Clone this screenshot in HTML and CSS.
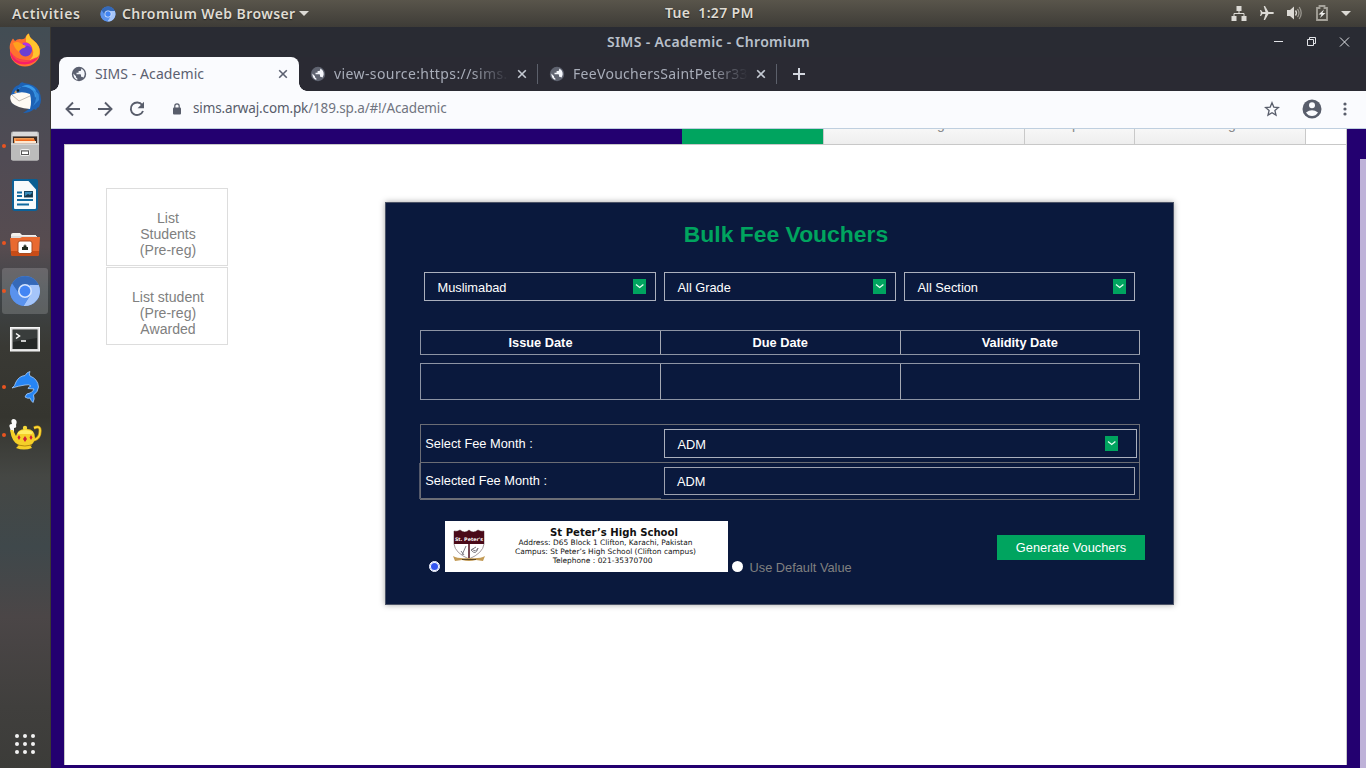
FILE: index.html
```html
<!DOCTYPE html>
<html lang="en">
<head>
<meta charset="utf-8">
<title>SIMS - Academic</title>
<link rel="stylesheet" href="styles.css">
</head>
<body>
<svg class="defs" width="0" height="0">
  <symbol id="globe" viewBox="0 0 16 16"><circle cx="8" cy="8" r="7.2" fill="currentColor"/><path class="land" d="M2.300 7.500L5 10.200V11q0 1 1.300 1.300V14Q2.500 12.600 2.300 7.500ZM9.500 2.300Q13.800 4 13.700 8.300Q13.400 10.500 12.200 11.800Q11.700 10.800 10.700 10.800H10V9q0-.8-.8-.8H5.500V6.800H7q.6 0 .6-.6V5H9q1.200 0 1.200-1.200V2.600Z"/></symbol>
  <symbol id="chromium" viewBox="0 0 32 32"><circle cx="16" cy="16" r="15" fill="#4b87e4"/><path d="M3 8.500A15 15 0 0 1 29.600 10L16 9.500L10 19Z" fill="#3569b8"/><path d="M29.700 10A15 15 0 0 1 14.500 31L21.500 20L21 10Z" fill="#a5c5fa"/><path d="M3 8.500A15 15 0 0 0 14.500 31L21 20L9.500 18Z" fill="#5a92ed"/><circle cx="16" cy="16" r="7" fill="#d7e5fd"/><circle cx="16" cy="16" r="5.400" fill="#4285f4"/></symbol>
  <symbol id="cross" viewBox="0 0 10 10"><path d="M1.200 1.200L8.800 8.800M8.800 1.200L1.200 8.800" stroke="currentColor" stroke-width="1.600"/></symbol>
</svg>

<header class="topbar">
  <span class="activities">Activities</span>
  <svg class="app-icon" width="16" height="16"><use href="#chromium"/></svg>
  <span class="app-name">Chromium Web Browser</span>
  <i class="caret"></i>
  <span class="clock">Tue&nbsp; 1:27 PM</span>
  <div class="indicators">
    <svg width="16" height="16" viewBox="0 0 16 16"><path d="M5.500 1h5v5h-5zM.5 11h5v5h-5zM10.500 11h5v5h-5z" fill="#dcdad5"/><path d="M8 6v2.500M3 11V8.500h10V11" fill="none" stroke="#dcdad5"/></svg>
    <svg width="16" height="16" viewBox="0 0 16 16"><path d="M15 8c0 .7-1 1-2 1H9.500L6 15H4.700L6.500 9H3.500L2 11H1L1.800 8L1 5h1l1.500 2h3L4.700 1H6l3.500 6H13c1 0 2 .3 2 1z" fill="#dcdad5"/></svg>
    <svg width="16" height="16" viewBox="0 0 16 16"><path d="M0 5h3l4-3.500v13L3 11H0z" fill="#dcdad5"/><path d="M8.500 5.500q2 2.500 0 5" fill="none" stroke="#dcdad5" stroke-width="1.300"/><path d="M10.500 3.800q3 4.200 0 8.400M12.200 2q4 6 0 12" fill="none" stroke="#9a978f" stroke-width="1.300"/></svg>
    <svg width="14" height="16" viewBox="0 0 14 16"><path d="M2 3h2.500V1h5v2H12v12H2z" fill="none" stroke="#a5a29a" stroke-width="1.800"/><path d="M9 4.500L3.500 9.500H6.500L5 13L10.500 8H7.500z" fill="#eeeeec"/></svg>
    <i class="caret"></i>
  </div>
</header>

<div class="desktop">
  <nav class="dock">
    <div class="dock-item"><svg width="34" height="34" viewBox="0 0 34 34">
      <path d="M2 17C1 12 3 8 5 5.500L7 8Q9 6 12 6Q17 7 18 3Q19 1 21 .5Q21 4 25 7Q32 12 32 19A15 14.500 0 0 1 2 19Z" fill="#ff712f"/>
      <path d="M18 4Q19 1 21 .5Q21 4 25 7Q33 13 31.500 21Q28 29 19 29Q28 24 24 14Q22 10 18 9Z" fill="#ffc52e"/>
      <path d="M2 18Q3 31.500 17 31.500Q27 31 31 23Q25 28 18 27Q7 27 2 18Z" fill="#f71e68"/>
      <path d="M3 20Q10 29 22 27L29 24Q24 29 16 29Q7 29 3 20Z" fill="#fb4a48"/>
      <circle cx="17.500" cy="17" r="6.500" fill="#6c3fd2"/><path d="M14 10Q22 8 24 16Q21 12 18 13Z" fill="#b530e6"/>
      <path d="M5 10Q10 8 12 10L18 13Q17 15 14 15.500Q11 17 11 19Q6 15 5 10Z" fill="#ffa11d"/></svg></div>
    <div class="dock-item"><svg width="34" height="34" viewBox="0 0 34 34">
      <path d="M3 14Q5 5 11 4Q13 0 16 2Q27 3 31 10Q35 19 31 26L29 27L28 29L26 28Q22 32 15 32L21 28L5 23Z" fill="#1d62b5"/>
      <path d="M9 9Q12 5 18 6Q27 8 27 17Q30 13 27 8Q21 2 15 5Z" fill="#3a9bea"/>
      <path d="M25 9Q31 16 25 25L31 19Q32 11 25 9Z" fill="#3487d6"/>
      <path d="M3 14Q13 9 22 13Q24 21 22 28Q9 27 4 22Q1 17 3 14Z" fill="#fdfaf4"/><path d="M4 14L11 20L22 15" fill="none" stroke="#bfb9b0"/><circle cx="10" cy="9.500" r="1.200" fill="#122"/><path d="M8 9L9 12L6 12Z" fill="#db9b55"/></svg></div>
    <div class="dock-item running"><svg width="34" height="34" viewBox="0 0 34 34">
      <rect x="3" y="2.500" width="28" height="29" rx="2" fill="#b8b8b8"/><path d="M5 3h24l1 4H4z" fill="#d9d9d9"/><rect x="5" y="7.500" width="24" height="7" fill="#3b2a22"/><path d="M6 9h20v5H6z" fill="#ef9b55"/><path d="M8 10.500h19v4H8z" fill="#f0681f"/><path d="M7 12h21v2H7z" fill="#fce6cf"/><path d="M3 14.500h28v15q0 2-2 2H5q-2 0-2-2z" fill="#bcbcbc"/><path d="M3 14.500h28v1H3z" fill="#ededed"/><rect x="12.500" y="20.500" width="9" height="6" rx="1" fill="none" stroke="#eee"/><rect x="13.500" y="22" width="7" height="3.500" fill="#fff" stroke="#555"/></svg></div>
    <div class="dock-item"><svg width="34" height="34" viewBox="0 0 34 34">
      <path d="M6 2h15L29 11v19q0 2-2 2H7q-2 0-2-2v-26q0-2 1-2z" fill="#f8fafb" stroke="#0c6198" stroke-width="2"/><path d="M20 1h8q2 0 2 2v9z" fill="#0a5e91"/><path d="M9 14.500h5M9 18h5M9 22h16M9 26.500h12" stroke="#10699f" stroke-width="2"/><rect x="16.500" y="13.500" width="8" height="5.500" fill="#388ab9" stroke="#18445f"/><path d="M17 18l3-2 2 1 2-2v4h-7z" fill="#173447"/></svg></div>
    <div class="dock-item running"><svg width="34" height="34" viewBox="0 0 34 34">
      <path d="M3 9q0-2 2-2h7l2 2h14v8H3z" fill="#f4f1ed"/><path d="M3 10h26v2H3z" fill="#ddd"/><path d="M2 12h10l2-1h18L31 28q0 2-2 2H5q-2 0-2-2z" fill="#e96a30"/><path d="M3 25h28v3q0 2-2 2H5q-2 0-2-2z" fill="#c94c17"/><rect x="10" y="15" width="14" height="12.500" rx="2" fill="#fff" stroke="#a74b20"/><path d="M14 24v-3h1.500v-1.500h1v-1h1v1h1V21H20v3z" fill="#222d20"/></svg></div>
    <div class="dock-item running active"><svg width="32" height="32"><use href="#chromium"/></svg></div>
    <div class="dock-item"><svg width="34" height="34" viewBox="0 0 34 34">
      <rect x="2.500" y="5.500" width="29" height="23.500" fill="#dedede" stroke="#f7f7f7"/><rect x="4.500" y="7.500" width="25" height="19.500" fill="#252827"/><path d="M5 8h24v8L5 20z" fill="#393d3c"/><path d="M8 11.500l3.500 2.500L8 16.500M13 19h5" fill="none" stroke="#fff" stroke-width="1.500"/></svg></div>
    <div class="dock-item running"><svg width="34" height="34" viewBox="0 0 34 34">
      <path d="M4 18Q7 16 8 12Q11 6 17 5.500Q19 2 22 1.500Q20.500 4 22 6Q30 9 30.500 17Q30 22 25.500 25Q27 29 25 32.500Q23 31 22 28Q20 29 17 27Q18 23 22 23Q25 22 26 19L20 18.500Q20 17 23 16Q21 14 17 15Q10 16 4 18Z" fill="#2685f5" stroke="#a9cdf7" stroke-width=".8"/></svg></div>
    <div class="dock-item running"><svg width="34" height="34" viewBox="0 0 34 34">
      <path d="M2 10Q0 6 4 6Q2 1 6 1Q10 2 8 7Q9 10 6 10L6 14H3Z" fill="#fafafa"/><path d="M26 10Q33 7 32 14Q32 20 26 22" fill="none" stroke="#c99a12" stroke-width="3"/><path d="M26 10Q33 7 32 14Q32 20 26 22" fill="none" stroke="#ffdf3c" stroke-width="1.500"/><path d="M2 12H5L8 18Q10 11 17 11Q27 10 27 20Q26 26 22 27L24 30Q16 33 8 30L11 27Q4 25 2 12Z" fill="#f5cf28"/><path d="M10 14Q17 10 25 14L24 16H10Z" fill="#ffed62"/><circle cx="17" cy="10" r="2.200" fill="#f6d839"/><path d="M9.500 27Q17 29 24 27" fill="none" stroke="#b78a0c"/><path d="M11 17l1.500 2.500-1.500 2.500L9.500 19.500zM17 18l2 3-2 3-2-3zM23 17l1.500 2.500-1.500 2.500-1.500-2.500z" fill="#d11f38"/></svg></div>
    <div class="app-grid"><i></i><i></i><i></i><i></i><i></i><i></i><i></i><i></i><i></i></div>
  </nav>

  <main class="window">
    <div class="titlebar">
      <span class="window-title">SIMS - Academic - Chromium</span>
      <svg class="win-buttons" width="80" height="12" viewBox="0 0 80 12" fill="none" stroke="#e2e4e8"><path d="M1 5.500h9M34.500 3.500h6v6h-6zM36.500 3.500v-2h6v6h-2M67 1.500l9 9M76 1.500l-9 9"/></svg>
    </div>
    <div class="tabs">
      <div class="tab tab-active"><svg class="favicon" width="16" height="16"><use href="#globe"/></svg><span class="t1">SIMS - Academic</span><svg class="close" width="10" height="10"><use href="#cross"/></svg></div>
      <div class="tab tab-two"><svg class="favicon" width="16" height="16"><use href="#globe"/></svg><span class="fade t2">view-source:https://sims.</span><svg class="close" width="10" height="10"><use href="#cross"/></svg></div>
      <div class="tab tab-three"><svg class="favicon" width="16" height="16"><use href="#globe"/></svg><span class="fade t3">FeeVouchersSaintPeter33</span><svg class="close" width="10" height="10"><use href="#cross"/></svg></div>
      <svg class="new-tab" width="14" height="14" viewBox="0 0 14 14"><path d="M7 1v12M1 7h12" stroke="#d3d7df" stroke-width="2"/></svg>
    </div>
    <div class="toolbar">
      <svg width="16" height="16" viewBox="0 0 16 16"><path d="M15 8H2M8 1.500L1.500 8L8 14.500" fill="none" stroke="currentColor" stroke-width="1.900"/></svg>
      <svg width="16" height="16" viewBox="0 0 16 16"><path d="M1 8h13M8 1.500L14.500 8L8 14.500" fill="none" stroke="currentColor" stroke-width="1.900"/></svg>
      <svg width="16" height="16" viewBox="0 0 16 16"><path d="M13.200 4A6.300 6.300 0 1 0 14 10" fill="none" stroke="currentColor" stroke-width="1.900"/><path d="M15 .8v6.400H8.600z" fill="currentColor"/></svg>
      <svg class="lock" width="10" height="12" viewBox="0 0 10 12"><rect x="1" y="4.500" width="8" height="7" rx="1" fill="currentColor"/><path d="M2.800 5V3a2.200 2.200 0 0 1 4.400 0v2" fill="none" stroke="currentColor" stroke-width="1.200"/></svg>
      <span class="url"><b>sims.arwaj.com.pk</b>/189.sp.a/#!/Academic</span>
      <svg class="star" width="16" height="16" viewBox="0 0 16 16"><path d="M8 1.800l1.800 4.300 4.600.4-3.500 3 1.100 4.600L8 11.700l-4 2.400 1.100-4.600-3.500-3 4.600-.4z" fill="none" stroke="currentColor" stroke-width="1.300"/></svg>
      <svg class="avatar" width="20" height="20" viewBox="0 0 20 20"><circle cx="10" cy="10" r="9.500" fill="currentColor"/><circle cx="10" cy="6.300" r="3" fill="#fafbfe"/><path d="M4 13.500q6-4.500 12 0q-2.300 3.500-6 3.500t-6-3.500z" fill="#fafbfe"/></svg>
      <svg class="menu" width="4" height="14" viewBox="0 0 4 14" fill="currentColor"><circle cx="2" cy="2" r="1.600"/><circle cx="2" cy="7" r="1.600"/><circle cx="2" cy="12" r="1.600"/></svg>
    </div>

    <div class="page">
      <div class="scroll-thumb"></div>
      <div class="page-tabs">
        <div class="ptab ptab-green"></div><div class="ptab ptab-a"><span>g</span></div><div class="ptab ptab-b"><span>p</span></div><div class="ptab ptab-c"><span>g</span></div><div class="ptab-rest"></div>
      </div>
      <div class="panel">
        <aside class="side">
          <a class="side-link">List<br>Students<br>(Pre-reg)</a>
          <a class="side-link">List student<br>(Pre-reg)<br>Awarded</a>
        </aside>
        <section class="card">
          <h1>Bulk Fee Vouchers</h1>
          <div class="filters">
            <div class="select">Muslimabad<svg class="arrow" width="13" height="15" viewBox="0 0 13 15"><path d="M3 5.500l3.700 3 3.700-3" fill="none" stroke="#e6fff3" stroke-width="1.300"/></svg></div>
            <div class="select">All Grade<svg class="arrow" width="13" height="15" viewBox="0 0 13 15"><path d="M3 5.500l3.700 3 3.700-3" fill="none" stroke="#e6fff3" stroke-width="1.300"/></svg></div>
            <div class="select">All Section<svg class="arrow" width="13" height="15" viewBox="0 0 13 15"><path d="M3 5.500l3.700 3 3.700-3" fill="none" stroke="#e6fff3" stroke-width="1.300"/></svg></div>
          </div>
          <div class="dates dates-head"><b>Issue Date</b><b>Due Date</b><b>Validity Date</b></div>
          <div class="dates dates-body"><span></span><span></span><span></span></div>
          <div class="months">
            <div class="label">Select Fee Month :</div>
            <div class="field"><div class="select wide">ADM<svg class="arrow" width="13" height="15" viewBox="0 0 13 15"><path d="M3 5.500l3.700 3 3.700-3" fill="none" stroke="#e6fff3" stroke-width="1.300"/></svg></div></div>
            <div class="label label-second">Selected Fee Month :</div>
            <div class="field field-second"><div class="input">ADM</div></div>
          </div>
          <div class="actions">
            <i class="radio checked"></i>
            <div class="letterhead">
              <svg class="crest" width="34" height="34" viewBox="0 0 34 34"><path d="M2 2Q5 3 8 1Q13 5 17 1Q21 5 26 1Q29 3 32 2V15Q31 24 17 30Q3 24 2 15Z" fill="#fff" stroke="#8c8084" stroke-width=".8"/><path d="M2 2Q5 3 8 1Q13 5 17 1Q21 5 26 1Q29 3 32 2V15H2Z" fill="#4a0a19"/><path d="M17 15v14" stroke="#4a0a19" stroke-width="1.500"/><path d="M14 17L10 26M9 22l3 4M20 20q4 4 6-1q-2 8-7 2l5-3" fill="none" stroke="#7d7a83"/><path d="M1 27Q6 30 17 29Q28 30 33 27L31 32L24 31Q17 33 10 31L3 32Z" fill="#c39b56"/><path d="M10 30.500h14" stroke="#5f4925"/><text x="17" y="12" class="crest-text">St. Peter's</text></svg>
              <div class="letter-text"><b>St Peter’s High School</b><span>Address: D65 Block 1 Clifton, Karachi, Pakistan</span><span>Campus: St Peter’s High School (Clifton campus)</span><span class="phone">Telephone : 021-35370700</span></div>
            </div>
            <i class="radio"></i>
            <span class="default">Use Default Value</span>
            <div class="generate">Generate Vouchers</div>
          </div>
        </section>
      </div>
    </div>
  </main>
</div>
</body>
</html>
```
FILE: styles.css
```css
* { box-sizing: border-box; }
body { margin: 0; width: 1366px; height: 768px; overflow: hidden; font-family: "Liberation Sans", Arial, sans-serif; }
.defs { position: absolute; }
svg { flex: none; display: block; }
.land { fill: #f4f6fb; }

.topbar { position: relative; height: 27px; display: flex; align-items: center; padding-left: 12px; background: linear-gradient(#59554b, #3e3c37); color: #dfdbd2; font: 600 14px/27px "Noto Sans", sans-serif; text-shadow: 0 1px 1px #222; white-space: nowrap; }
.activities { width: 88px; letter-spacing: .6px; }
.app-icon { margin-right: 6px; }
.app-name { width: 177px; letter-spacing: .4px; }
.clock { position: absolute; left: 665px; top: -1px; letter-spacing: .33px; }
.caret { width: 0; height: 0; border: 5px solid transparent; border-top-color: #dcdad5; border-bottom: 0; }
.indicators { margin-left: auto; display: flex; align-items: center; gap: 12px; padding-right: 15px; margin-top: -1px; }

.desktop { display: flex; height: 741px; }
.dock { width: 51px; flex: none; display: flex; flex-direction: column; background: linear-gradient(#424d54 0, #504b54 130px, #574c50 220px, #3f4549 265px, #393934 320px, #35352f 390px, #454744 450px, #3f484b 520px, #4b4647 590px, #403f3d 680px, #3c3c39 741px); border-right: 1px solid #3a3834; }
.dock-item { position: relative; height: 48.1px; flex: none; display: flex; align-items: center; justify-content: center; }
.dock-item:first-child { margin-top: -.8px; }
.dock-item.active::before { content: ""; position: absolute; left: 2px; top: 1px; width: 46px; height: 46px; border-radius: 3px; background: rgba(255,255,255,.17); }
.dock-item svg { position: relative; }
.running::after { content: ""; position: absolute; left: 2px; top: 22px; width: 4px; height: 4px; border-radius: 50%; background: #e95420; }
.app-grid { margin: auto 0 14px 15px; display: grid; grid-template-columns: repeat(3, 4px); gap: 4px; }
.app-grid i { width: 4px; height: 4px; border-radius: 50%; background: #f2f2f2; }

.window { flex: 1; display: flex; flex-direction: column; background: #292b33; font-family: "Noto Sans", sans-serif; }
.titlebar { position: relative; height: 30px; text-align: center; color: #b9c0cb; font-weight: 600; font-size: 14px; line-height: 30px; letter-spacing: .31px; }
.win-buttons { position: absolute; right: 13px; top: 9px; }
.tabs { height: 34px; display: flex; padding-left: 8px; background: #2a2a33; color: #a8adb9; font-size: 14px; line-height: 33px; white-space: nowrap; }
.tab { position: relative; display: flex; align-items: center; }
.tab .favicon { color: #5f6370; margin: 0 8px 0 12px; }
.tab .close { margin-left: auto; color: #c4c9d2; }
.tab-active { width: 240px; background: #fafbfe; border-radius: 8px 8px 0 0; color: #5b6070; padding-right: 11px; }
.tab-active .t1 { letter-spacing: .07px; margin-top: -2px; }
.tab-active .close, .tab-active .favicon { color: #5b6070; }
.tab-active::before, .tab-active::after { content: ""; position: absolute; bottom: 0; width: 8px; height: 8px; }
.tab-active::before { left: -8px; background: radial-gradient(circle at 0 0, transparent 7.5px, #fafbfe 8px); }
.tab-active::after { right: -8px; background: radial-gradient(circle at 100% 0, transparent 7.5px, #fafbfe 8px); }
.tab-two, .tab-three { width: 239px; height: 20px; margin-top: 7px; border-right: 1px solid #5c606b; padding-right: 10px; line-height: 19px; }
.tab-two .land, .tab-three .land { fill: #2a2a33; }
.tab-two .favicon, .tab-three .favicon { margin-left: 11px; }
.fade { width: 175px; margin-top: -2px; overflow: hidden; -webkit-mask-image: linear-gradient(90deg, #000 78%, transparent); mask-image: linear-gradient(90deg, #000 78%, transparent); }
.t2 { letter-spacing: .4px; }
.t3 { letter-spacing: .3px; }
.new-tab { margin: 10px 0 0 15px; }
.toolbar { height: 38px; display: flex; align-items: center; padding: 0 19px 1px 14px; background: #fafbfe; border-bottom: 1px solid #bfcfdf; color: #585d6b; }
.toolbar svg { margin-right: 16px; }
.toolbar .lock { margin: 0 11px 0 11px; }
.url { margin-top: -2px; font-size: 13.5px; letter-spacing: -.14px; color: #707480; }
.url b { font-weight: 400; color: #585d6b; }
.toolbar .star { margin-left: auto; margin-right: 22px; }
.toolbar .avatar { margin-right: 21px; }
.toolbar .menu { margin-right: 0; }

.page { position: relative; flex: 1; background: #230070; padding-left: 13px; font-family: "Liberation Sans", Arial, sans-serif; overflow: hidden; }
.scroll-thumb { position: absolute; right: 0; top: 30px; width: 6px; height: 620px; background: #beb2d8; }
.page-tabs { display: flex; height: 15px; width: 1283px; padding-left: 618px; }
.ptab { background: linear-gradient(#f7f7f7, #eee); border-right: 1px solid #c9c9c9; color: #888; font-size: 14px; overflow: hidden; }
.ptab span { display: block; margin-top: -13px; line-height: 16px; }
.ptab-green { width: 142px; background: #00a45f; }
.ptab-a { width: 201px; padding-left: 113px; }
.ptab-b { width: 110px; padding-left: 47px; }
.ptab-c { width: 171px; padding-left: 93px; }
.ptab-rest { flex: 1; background: #fff; border-right: 1px solid #c9c9c9; }
.panel { width: 1283px; height: 621px; background: #fff; border: 1px solid #c8c8c8; border-bottom: 0; display: flex; align-items: flex-start; padding-left: 41px; }
.side { width: 122px; margin-top: 43px; display: flex; flex-direction: column; gap: 1px; }
.side-link { height: 78px; border: 1px solid #ddd; padding: 21px 0 0 2px; text-align: center; font-size: 14.08px; line-height: 16px; color: #808080; }

.card { width: 789px; height: 403px; margin: 57px 0 0 157px; background: #0a193d; border: 1px solid #4b5266; box-shadow: 0 0 6px rgba(0,0,0,.35); padding-left: 34px; color: #fff; font-size: 12.8px; }
.card h1 { margin: 17px 0 0; width: 732px; height: 52px; font-size: 22.9px; line-height: 28px; text-align: center; color: #00a45f; }
.filters { display: flex; gap: 8px; padding-left: 4px; }
.select { position: relative; width: 232px; height: 29px; border: 1px solid #abb0bd; padding-left: 12.5px; line-height: 30px; }
.filters .select:last-child { width: 231px; }
.arrow { position: absolute; right: 9px; top: 6px; background: #00a45f; }
.filters .select:last-child .arrow { right: 8px; }
.dates { display: grid; grid-template-columns: 240px 239.5px 239.5px; width: 720px; border: 1px solid #8d94a4; border-right: 0; text-align: center; }
.dates > * { border-right: 1px solid #a5a9b3; line-height: 23px; }
.dates-head { margin-top: 29px; height: 25px; }
.dates-body { margin-top: 8px; height: 37px; }
.months { margin-top: 24px; width: 720px; height: 76px; display: grid; grid-template: 38px 36px / 240px 478px; border: 1px solid #6b6d75; }
.months > * { border-bottom: 1px solid #6b6d75; }
.label { padding-left: 4.3px; line-height: 38px; }
.label-second { line-height: 36px; box-shadow: -1px -1px 0 #6b6d75, -2px 0 0 #53586a; }
.months .field { padding: 4px 0 0 3px; }
.months .field-second { border-bottom: 0; }
.wide { width: 473px; }
.wide .arrow { right: 18px; }
.input { width: 471px; height: 28px; border: 1px solid #9ea2b0; padding-left: 12px; line-height: 28px; }
.actions { display: flex; align-items: flex-start; margin-top: 20.5px; }
.radio { width: 11px; height: 11px; border-radius: 50%; background: #fff; margin: 40.5px 0 0 9px; }
.radio.checked { background: #3355f0; border: 1px solid #fff; box-shadow: inset 0 0 0 1px #fff; }
.letterhead { width: 283px; height: 51.5px; margin-left: 5px; background: #fff; color: #111; display: flex; }
.crest { margin: 8px 0 0 7px; }
.crest-text { font: bold 4.8px "DejaVu Sans", sans-serif; fill: #fff; text-anchor: middle; }
.letter-text { flex: 1; display: flex; flex-direction: column; align-items: center; padding: 6px 3px 0 0; font: 7.45px/9px "DejaVu Sans", sans-serif; white-space: nowrap; }
.letter-text b { font-size: 10.1px; line-height: 11px; padding-left: 17px; }
.letter-text .phone { padding-right: 6px; }
.letterhead + .radio { margin-left: 4px; }
.default { margin: 39.5px 0 0 6.5px; color: #808080; line-height: 15px; }
.generate { width: 148px; height: 25px; margin: 14px 0 0 auto; position: relative; background: #00a45f; line-height: 25px; text-align: center; }
.actions { width: 725px; }
```
